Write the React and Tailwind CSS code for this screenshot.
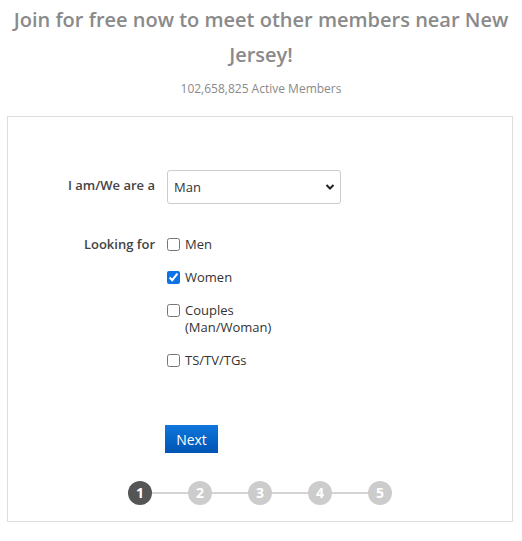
import { useState } from "react";

const options = [
  { id: "men", label: "Men" },
  { id: "women", label: "Women" },
  { id: "couples", label: "Couples (Man/Woman)" },
  { id: "ts", label: "TS/TV/TGs" },
];

function Steps({ current = 1 }) {
  return (
    <div className="flex items-center justify-center">
      {[1, 2, 3, 4, 5].map((n, i) => (
        <div key={n} className="flex items-center">
          {i > 0 && <div className="h-[2px] w-[36px] bg-[#d4d4d4]" />}
          <div
            className={
              "flex h-[24px] w-[24px] items-center justify-center rounded-full text-[14px] font-bold leading-none text-white " +
              (n === current ? "bg-[#555555]" : "bg-[#cccccc]")
            }
          >
            {n}
          </div>
        </div>
      ))}
    </div>
  );
}

export default function App() {
  const [gender, setGender] = useState("man");
  const [looking, setLooking] = useState({ women: true });

  const toggle = (id) => setLooking((p) => ({ ...p, [id]: !p[id] }));

  return (
    <div
      className="w-[522px] bg-white text-[#333]"
      style={{ fontFamily: '"Open Sans", Arial, sans-serif' }}
    >
      {/* Header */}
      <h1 className="px-2 pt-[2px] text-center text-[20px] font-semibold leading-[35px] text-[#8a8a8a]">
        Join for free now to meet other members near New Jersey!
      </h1>
      <p className="mt-[8px] text-center text-[12px] leading-[18px] text-[#8a8a8a]">
        102,658,825 Active Members
      </p>

      {/* Form box */}
      <div className="ml-[7px] mt-[18px] w-[506px] border border-[#dddddd] pb-[16px] pt-[53px]">
        <div className="flex items-start">
          <label className="w-[147px] pt-[6px] text-right text-[13px] font-semibold leading-[18px] text-[#444]">
            I am/We are a
          </label>
          <div className="relative ml-3 w-[174px]">
            <select
              value={gender}
              onChange={(e) => setGender(e.target.value)}
              className="h-[34px] w-full appearance-none rounded-[3px] border border-[#cccccc] bg-white pl-[6px] pt-[2px] text-[13px] text-[#333] outline-none"
            >
              <option value="man">Man</option>
              <option value="woman">Woman</option>
              <option value="couple">Couple</option>
            </select>
            <svg
              className="pointer-events-none absolute right-[6px] top-[13px]"
              width="10"
              height="8"
              viewBox="0 0 10 8"
            >
              <path d="M1.5 2 L5 5.5 L8.5 2" fill="none" stroke="#222" strokeWidth="2" />
            </svg>
          </div>
        </div>

        <div className="mt-[32px] flex items-start">
          <span className="w-[147px] text-right text-[13px] font-semibold leading-[17px] text-[#444]">
            Looking for
          </span>
          <div className="ml-3 flex flex-col gap-[16px]">
            {options.map((o) => (
              <label key={o.id} className="flex items-start text-[13px] leading-[17px] text-[#333]">
                <input
                  type="checkbox"
                  checked={!!looking[o.id]}
                  onChange={() => toggle(o.id)}
                  className="mt-[2px] h-[13px] w-[13px] accent-[#0b73e6]"
                />
                <span className="ml-[5px] w-[100px]">{o.label}</span>
              </label>
            ))}
          </div>
        </div>

        <div className="mt-[56px] pl-[157px]">
          <button
            type="button"
            className="h-[28px] w-[53px] bg-gradient-to-b from-[#1077dd] to-[#0054b4] text-[14px] text-white"
          >
            Next
          </button>
        </div>

        <div className="mt-[28px]">
          <Steps current={1} />
        </div>
      </div>
    </div>
  );
}
